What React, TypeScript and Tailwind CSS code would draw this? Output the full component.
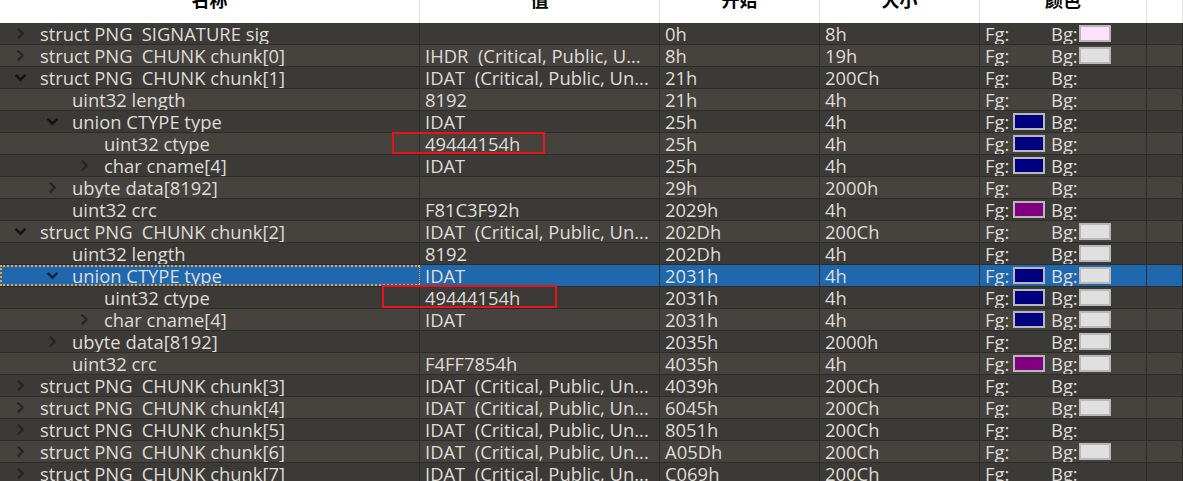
import React from "react";

type Row = {
  level: number;
  arrow?: "open" | "closed";
  name: string;
  value: string;
  start: string;
  size: string;
  fg?: string;
  bg?: string;
};

const NAVY = "#000080";
const PURPLE = "#800080";
const GREY = "#e0e0e0";
const PINK = "#ffe0ff";
const CHUNK_VAL = "IDAT\u00a0\u00a0(Critical, Public, Un...";

const rows: Row[] = [
  { level: 0, arrow: "closed", name: "struct PNG\u2002SIGNATURE sig", value: "", start: "0h", size: "8h", bg: PINK },
  { level: 0, arrow: "closed", name: "struct PNG\u2002CHUNK chunk[0]", value: "IHDR\u00a0\u00a0(Critical, Public, U...", start: "8h", size: "19h", bg: GREY },
  { level: 0, arrow: "open", name: "struct PNG\u2002CHUNK chunk[1]", value: CHUNK_VAL, start: "21h", size: "200Ch" },
  { level: 1, name: "uint32 length", value: "8192", start: "21h", size: "4h" },
  { level: 1, arrow: "open", name: "union CTYPE type", value: "IDAT", start: "25h", size: "4h", fg: NAVY },
  { level: 2, name: "uint32 ctype", value: "49444154h", start: "25h", size: "4h", fg: NAVY },
  { level: 2, arrow: "closed", name: "char cname[4]", value: "IDAT", start: "25h", size: "4h", fg: NAVY },
  { level: 1, arrow: "closed", name: "ubyte data[8192]", value: "", start: "29h", size: "2000h" },
  { level: 1, name: "uint32 crc", value: "F81C3F92h", start: "2029h", size: "4h", fg: PURPLE },
  { level: 0, arrow: "open", name: "struct PNG\u2002CHUNK chunk[2]", value: CHUNK_VAL, start: "202Dh", size: "200Ch", bg: GREY },
  { level: 1, name: "uint32 length", value: "8192", start: "202Dh", size: "4h", bg: GREY },
  { level: 1, arrow: "open", name: "union CTYPE type", value: "IDAT", start: "2031h", size: "4h", fg: NAVY, bg: GREY },
  { level: 2, name: "uint32 ctype", value: "49444154h", start: "2031h", size: "4h", fg: NAVY, bg: GREY },
  { level: 2, arrow: "closed", name: "char cname[4]", value: "IDAT", start: "2031h", size: "4h", fg: NAVY, bg: GREY },
  { level: 1, arrow: "closed", name: "ubyte data[8192]", value: "", start: "2035h", size: "2000h", bg: GREY },
  { level: 1, name: "uint32 crc", value: "F4FF7854h", start: "4035h", size: "4h", fg: PURPLE, bg: GREY },
  { level: 0, arrow: "closed", name: "struct PNG\u2002CHUNK chunk[3]", value: CHUNK_VAL, start: "4039h", size: "200Ch" },
  { level: 0, arrow: "closed", name: "struct PNG\u2002CHUNK chunk[4]", value: CHUNK_VAL, start: "6045h", size: "200Ch", bg: GREY },
  { level: 0, arrow: "closed", name: "struct PNG\u2002CHUNK chunk[5]", value: CHUNK_VAL, start: "8051h", size: "200Ch" },
  { level: 0, arrow: "closed", name: "struct PNG\u2002CHUNK chunk[6]", value: CHUNK_VAL, start: "A05Dh", size: "200Ch", bg: GREY },
  { level: 0, arrow: "closed", name: "struct PNG\u2002CHUNK chunk[7]", value: CHUNK_VAL, start: "C069h", size: "200Ch" },
];

const SELECTED = 11;
const cols = "grid grid-cols-[420px_240px_160px_160px_167px_1fr]";

function Arrow({ kind, selected }: { kind: "open" | "closed"; selected: boolean }) {
  const color = kind === "open" ? (selected ? "#0c2340" : "#141414") : "#262626";
  return (
    <svg width="13" height="13" viewBox="0 0 12 12">
      {kind === "open" ? (
        <path d="M1.5 3.5 L6 8 L10.5 3.5" fill="none" stroke={color} strokeWidth="2.3" />
      ) : (
        <path d="M3.5 1.5 L8 6 L3.5 10.5" fill="none" stroke={color} strokeWidth="2.1" />
      )}
    </svg>
  );
}

function Swatch({ color }: { color: string }) {
  return (
    <span
      className="inline-block h-[17px] w-[32px] border-2 border-[#b8b8b8]"
      style={{ backgroundColor: color }}
    />
  );
}

export default function App() {
  return (
    <div
      className="relative h-[481px] w-[1183px] overflow-hidden bg-[#3c3a36] text-[18.4px] leading-[21px] text-[#dedcd8]"
      style={{ fontFamily: '"Open Sans", "Noto Sans CJK SC", sans-serif' }}
    >
      {/* column headers, scrolled half out of view */}
      <div
        className={`${cols} h-[23px] bg-white font-bold text-[18px] text-black`}
        style={{ fontFamily: '"Noto Sans CJK SC", sans-serif' }}
      >
        {["名称", "值", "开始", "大小", "颜色", ""].map((h, i) => (
          <div key={i} className="flex h-[23px] justify-center overflow-hidden border-r border-[#e2e2e2]">
            <span className="-mt-[14px] leading-[26px]">{h}</span>
          </div>
        ))}
      </div>

      {rows.map((r, i) => {
        const sel = i === SELECTED;
        const bg = sel ? "bg-[#2068ae]" : i % 2 === 1 ? "bg-[#46433e]" : "bg-[#3c3a36]";
        const cell = "flex items-center overflow-hidden whitespace-nowrap border-r border-[#2e2c29] pl-[5px]";
        return (
          <div key={i} className={`${cols} h-[22px] border-b border-[#2e2c29] ${bg}`}>
            <div
              className={`flex items-center overflow-hidden whitespace-nowrap border-r border-[#2e2c29] ${
                sel ? "border-2 border-dotted border-[#f0a040]" : ""
              }`}
            >
              <span
                className="flex w-[40px] shrink-0 justify-center"
                style={{ marginLeft: r.level * 32 + (sel ? -2 : 0) }}
              >
                {r.arrow && <Arrow kind={r.arrow} selected={sel} />}
              </span>
              <span>{r.name}</span>
            </div>
            <div className={cell}>{r.value}</div>
            <div className={cell}>{r.start}</div>
            <div className={cell}>{r.size}</div>
            <div className={cell}>
              <span className="flex w-[66px] shrink-0 items-center gap-[1px]">
                <span className="w-[27px]">Fg:</span>
                {r.fg && <Swatch color={r.fg} />}
              </span>
              <span className="flex items-center gap-[1px]">
                <span className="w-[27px]">Bg:</span>
                {r.bg && <Swatch color={r.bg} />}
              </span>
            </div>
            <div className="border-r border-[#2e2c29]" />
          </div>
        );
      })}

      {/* red annotation boxes */}
      <div className="pointer-events-none absolute left-[392px] top-[132px] h-[22px] w-[153px] border-2 border-[#e8141c]" />
      <div className="pointer-events-none absolute left-[382px] top-[285px] h-[23px] w-[175px] border-2 border-[#e8141c]" />
    </div>
  );
}
